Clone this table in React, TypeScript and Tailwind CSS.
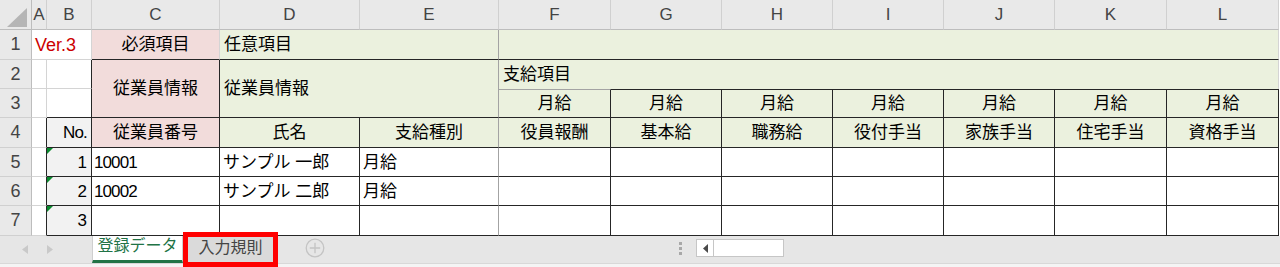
import type { ReactNode } from 'react'

// Border presets for the sheet: light gridline, mid-grey divider, dark table rule.
const gridR = 'border-r border-r-[#d4d4d4]'
const gridB = 'border-b border-b-[#d4d4d4]'
const midR = 'border-r border-r-[#a3a3a3]'
const darkR = 'border-r border-r-[#262626]'
const darkB = 'border-b border-b-[#262626]'
const darkT = 'border-t border-t-[#262626]'
const midT = 'border-t border-t-[#a3a3a3]'

const pink = 'bg-[#f2dcdb]'
const green = 'bg-[#ebf1de]'

const colLetters = ['A', 'B', 'C', 'D', 'E', 'F', 'G', 'H', 'I', 'J', 'K', 'L']
const payItems = ['役員報酬', '基本給', '職務給', '役付手当', '家族手当', '住宅手当', '資格手当']

const employees = [
  { no: 1, code: '10001', name: 'サンプル 一郎', kind: '月給' },
  { no: 2, code: '10002', name: 'サンプル 二郎', kind: '月給' },
  { no: 3, code: '', name: '', kind: '' },
]

function Cell({ className = '', children }: { className?: string; children?: ReactNode }) {
  return (
    <div className={`flex items-center overflow-hidden whitespace-nowrap text-[17px] leading-none ${className}`}>
      {children}
    </div>
  )
}

function RowHead({ n }: { n: number }) {
  return (
    <div className="flex items-center justify-center bg-[#e9e9e9] border-r border-r-[#bdbdbd] border-b border-b-[#d0d0d0] text-[18px] text-[#444]">
      {n}
    </div>
  )
}

function ErrorMark() {
  return (
    <span className="absolute left-0 top-0 w-0 h-0 border-t-[6px] border-t-[#0a8a2e] border-r-[6px] border-r-transparent" />
  )
}

function SheetGrid() {
  return (
    <div className="grid grid-cols-[32px_15px_45px_128px_140px_139px_112px_111px_111px_111px_111px_112px_112px] grid-rows-[30px_30px_29px_29px_30px_29px_29px_30px]">
      {/* column headings */}
      <div className="relative bg-[#e9e9e9] border-r border-r-[#bdbdbd] border-b border-b-[#bdbdbd]">
        <svg className="absolute left-[7px] top-[8px]" width="20" height="19" viewBox="0 0 20 19">
          <polygon points="20,0 20,19 0,19" fill="#b5b5b5" />
        </svg>
      </div>
      {colLetters.map(l => (
        <div key={l} className="flex items-center justify-center bg-[#e9e9e9] border-r border-r-[#d0d0d0] border-b border-b-[#bdbdbd] text-[17px] text-[#444]">
          {l}
        </div>
      ))}

      {/* row 1 */}
      <RowHead n={1} />
      <Cell className={`col-span-2 pl-[3px] ${gridR} ${gridB} text-[#cc0000] text-[18px]`}>Ver.3</Cell>
      <Cell className={`justify-center ${pink} ${gridR} ${darkB}`}>必須項目</Cell>
      <Cell className={`col-span-2 pl-[4px] ${green} ${midR} ${darkB}`}>任意項目</Cell>
      <Cell className={`col-span-7 ${green} ${gridR} ${darkB}`} />

      {/* rows 2–3 */}
      <RowHead n={2} />
      <Cell className={`${gridR} ${gridB}`} />
      <Cell className={`${darkR} ${gridB}`} />
      <Cell className={`row-span-2 justify-center ${pink} ${darkR} ${darkB}`}>従業員情報</Cell>
      <Cell className={`col-span-2 row-span-2 pl-[4px] ${green} ${midR} ${darkB}`}>従業員情報</Cell>
      <Cell className={`col-span-7 pl-[4px] ${green} ${gridR}`}>支給項目</Cell>

      <RowHead n={3} />
      <Cell className={`${gridR} ${gridB}`} />
      <Cell className={`${darkR} ${darkB}`} />
      {payItems.map((p, i) => (
        <Cell key={p} className={`justify-center ${green} ${i === 0 ? midT : darkT} ${darkR} ${darkB}`}>月給</Cell>
      ))}

      {/* row 4: field names */}
      <RowHead n={4} />
      <Cell className={`${darkR} ${gridB}`} />
      <Cell className={`justify-end pr-[4px] bg-[#f2f2f2] ${darkR} ${darkB} text-[16px] tracking-[-0.8px]`}>No.</Cell>
      <Cell className={`justify-center ${pink} ${darkR} ${darkB}`}>従業員番号</Cell>
      <Cell className={`justify-center ${green} ${darkR} ${darkB}`}>氏名</Cell>
      <Cell className={`justify-center ${green} ${midR} ${darkB}`}>支給種別</Cell>
      {payItems.map(p => (
        <Cell key={p} className={`justify-center ${green} ${darkR} ${darkB}`}>{p}</Cell>
      ))}

      {/* employee rows */}
      {employees.map(e => (
        <div key={e.no} className="contents">
          <RowHead n={e.no + 4} />
          <Cell className={`${darkR} ${gridB}`} />
          <Cell className={`relative justify-end pr-[4px] bg-[#f2f2f2] ${darkR} ${darkB} text-[17px]`}>
            <ErrorMark />
            {e.no}
          </Cell>
          <Cell className={`pl-[2px] ${darkR} ${darkB} text-[17px] tracking-[-0.9px]`}>{e.code}</Cell>
          <Cell className={`pl-[3px] ${darkR} ${darkB}`}>{e.name}</Cell>
          <Cell className={`pl-[3px] ${midR} ${darkB}`}>{e.kind}</Cell>
          {payItems.map(p => (
            <Cell key={p} className={`${darkR} ${darkB}`} />
          ))}
        </div>
      ))}
    </div>
  )
}

function SheetTabs() {
  return (
    <div className="relative">
      <div className="flex h-[27px] bg-[#e6e6e6] text-[16px] leading-none">
        <div className="w-[92px] flex items-center">
          <svg className="ml-[22px]" width="6" height="9" viewBox="0 0 6 9">
            <polygon points="6,0 6,9 0,4.5" fill="#c9c9c9" />
          </svg>
          <svg className="ml-[19px]" width="6" height="9" viewBox="0 0 6 9">
            <polygon points="0,0 0,9 6,4.5" fill="#c9c9c9" />
          </svg>
        </div>
        <div className="w-[91px] flex items-center justify-center pb-[4px] bg-white border-x border-x-[#cfcfcf] border-b-[3px] border-b-[#217346] text-[#217346]">
          登録データ
        </div>
        <div className="w-[95px] flex items-center justify-center pb-[4px] bg-[#dadada] text-[#444]">
          入力規則
        </div>
        <div className="w-[74px] flex items-center justify-center pb-[3px]">
          <svg width="20" height="20" viewBox="0 0 20 20" fill="none" stroke="#c4c4c4" strokeWidth="1.3">
            <circle cx="10" cy="10" r="8.8" />
            <path d="M10 4.8v10.4M4.8 10h10.4" />
          </svg>
        </div>
        <div className="ml-auto w-[608px] flex items-center">
          <div className="w-[16px] flex flex-col items-center gap-[2px] pb-[3px]">
            <span className="w-[3px] h-[3px] bg-[#a8a8a8]" />
            <span className="w-[3px] h-[3px] bg-[#a8a8a8]" />
            <span className="w-[3px] h-[3px] bg-[#a8a8a8]" />
          </div>
          <div className="ml-[8px] mb-[3px] flex h-[18px]">
            <div className="w-[18px] flex items-center justify-center bg-white border border-[#c6c6c6]">
              <svg width="5" height="9" viewBox="0 0 5 9">
                <polygon points="5,0 5,9 0,4.5" fill="#4a4a4a" />
              </svg>
            </div>
            <div className="w-[70px] bg-white border border-l-0 border-[#c6c6c6]" />
          </div>
        </div>
      </div>
      <div className="h-[4px] bg-[#f4f4f4] border-t border-t-[#d8d8d8]" />
      <div className="absolute left-[183px] top-[-4px] w-[95px] h-[35px] border-[5px] border-[#ff0000]" />
    </div>
  )
}

export default function App() {
  return (
    <div className="w-[1280px] h-[267px] overflow-hidden bg-white text-black font-['Liberation_Sans','Noto_Sans_CJK_JP',sans-serif]">
      <SheetGrid />
      <SheetTabs />
    </div>
  )
}
